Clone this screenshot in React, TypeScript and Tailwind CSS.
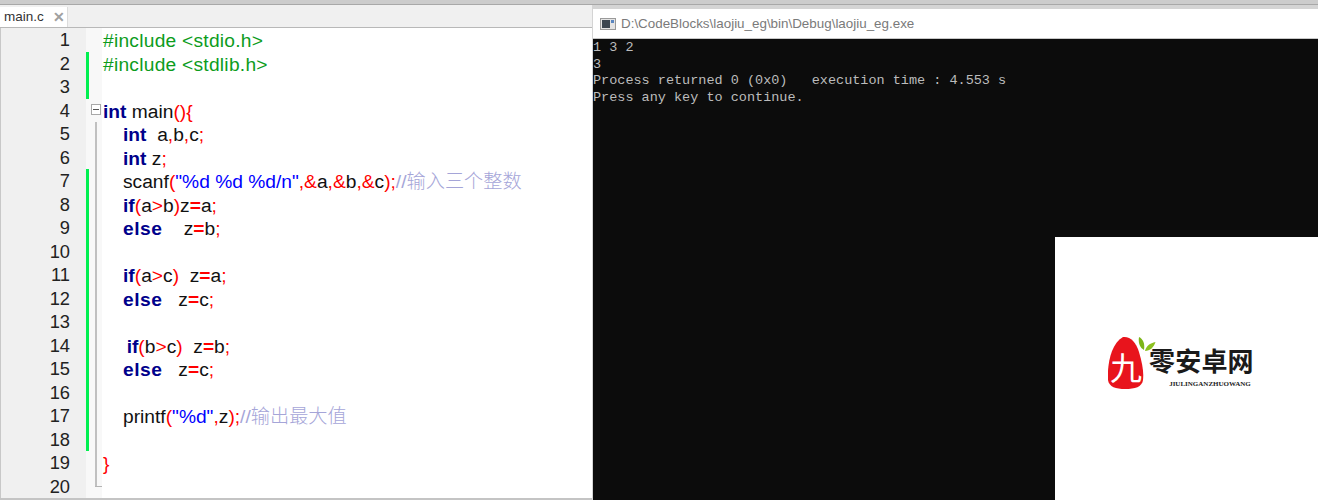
import { Fragment } from "react";

type Tok = [string, string];

const KW = "text-[#00008b] font-bold";
const KW2 = "text-[#00008b] font-bold tracking-[0.5px]";
const STR = "text-[#0000ff]";
const OP = "text-[#ff0000]";
const EQ = "text-[#ff0000] font-bold";
const CM = "text-[#a5a5d8] font-light";
const PP = "text-[#0c9c1c] tracking-[0.25px]";
const ID = "text-[#111111]";
const IN = "text-[18px]";
const IN2 = "text-[17px]";

const lines: Tok[][] = [
  [[PP, "#include <stdio.h>"]],
  [[PP, "#include <stdlib.h>"]],
  [],
  [[KW, "int"], [ID, " main"], [OP, "(){"]],
  [[IN, "    "], [KW, "int"], [ID, "  a"], [OP, ","], [ID, "b"], [OP, ","], [ID, "c"], [OP, ";"]],
  [[IN, "    "], [KW, "int"], [ID, " z"], [OP, ";"]],
  [[IN, "    "], [ID, "scanf"], [OP, "("], [STR, "\"%d %d %d/n\""], [OP, ",&"], [ID, "a"], [OP, ",&"], [ID, "b"], [OP, ",&"], [ID, "c"], [OP, ");"], [CM, "//输入三个整数"]],
  [[IN, "    "], [KW, "if"], [OP, "("], [ID, "a"], [OP, ">"], [ID, "b"], [OP, ")"], [ID, "z"], [EQ, "="], [ID, "a"], [OP, ";"]],
  [[IN, "    "], [KW2, "else"], [ID, "    z"], [EQ, "="], [ID, "b"], [OP, ";"]],
  [],
  [[IN, "    "], [KW, "if"], [OP, "("], [ID, "a"], [OP, ">"], [ID, "c"], [OP, ")"], [ID, "  z"], [EQ, "="], [ID, "a"], [OP, ";"]],
  [[IN, "    "], [KW2, "else"], [ID, "   z"], [EQ, "="], [ID, "c"], [OP, ";"]],
  [],
  [[IN2, "     "], [KW, "if"], [OP, "("], [ID, "b"], [OP, ">"], [ID, "c"], [OP, ")"], [ID, "  z"], [EQ, "="], [ID, "b"], [OP, ";"]],
  [[IN, "    "], [KW2, "else"], [ID, "   z"], [EQ, "="], [ID, "c"], [OP, ";"]],
  [],
  [[IN, "    "], [ID, "printf"], [OP, "("], [STR, "\"%d\""], [OP, ","], [ID, "z"], [OP, ");"], [CM, "//输出最大值"]],
  [],
  [[OP, "}"]],
  [],
];

const changed = (n: number) => (n >= 2 && n <= 3) || (n >= 7 && n <= 18);

function FoldMark({ n }: { n: number }) {
  if (n < 4) return null;
  if (n === 4) {
    return (
      <div className="absolute left-[2px] top-[5px] flex h-[11px] w-[10px] items-center justify-center border border-[#a8a8a8] bg-white">
        <div className="h-px w-[6px] bg-[#555555]" />
      </div>
    );
  }
  if (n === 20) {
    return (
      <Fragment>
        <div className="absolute left-[6px] top-0 h-[12px] w-[2px] bg-[#c0c0c0]" />
        <div className="absolute left-[6px] top-[11px] h-px w-[7px] bg-[#b4b4b4]" />
      </Fragment>
    );
  }
  return <div className="absolute left-[6px] top-0 h-full w-[2px] bg-[#c0c0c0]" />;
}

function Editor() {
  return (
    <div className="flex w-[592px] shrink-0 flex-col bg-white">
      {/* Tabs */}
      <div className="flex h-[22px] shrink-0 items-end bg-[#f0f0f0] font-['Liberation_Sans',sans-serif]">
        <div className="flex h-[20px] w-[68px] items-center gap-[9px] border-r border-[#dcdcdc] bg-white pl-[4px] text-[13.5px] leading-none text-[#333333]">
          <span>main.c</span>
          <span className="text-[14px] font-bold text-[#a0a0a0]">✕</span>
        </div>
      </div>
      <div className="h-px shrink-0 bg-[#b8b8b8]" />
      {/* Code */}
      <div className="flex min-h-0 flex-1 flex-col overflow-hidden border-l border-[#c8c8c8] font-['Liberation_Sans','Noto_Sans_CJK_SC',sans-serif] text-[19.2px]">
        {lines.map((toks, i) => {
          const n = i + 1;
          return (
            <div key={n} className="flex h-[23.5px] shrink-0 leading-[25px]">
              <div className="w-[69px] shrink-0 bg-[#f0f0f0] text-right text-[18.3px] leading-[24px] text-[#222222]">{n}</div>
              <div className="w-[16px] shrink-0 bg-[#f0f0f0]" />
              <div className={changed(n) ? "w-[3px] shrink-0 bg-[#00f050]" : "w-[3px] shrink-0 bg-[#f8f8f8]"} />
              <div className="relative w-[13px] shrink-0 bg-[#f8f8f8]">
                <FoldMark n={n} />
              </div>
              <div className="whitespace-pre pl-[1px]">
                {toks.map(([cls, text], j) => (
                  <span key={j} className={cls}>
                    {text}
                  </span>
                ))}
              </div>
            </div>
          );
        })}
      </div>
      <div className="h-[2px] shrink-0 bg-[#c4c4c4]" />
    </div>
  );
}

function ConsoleIcon() {
  return (
    <svg width="16" height="14" viewBox="0 0 16 14" className="shrink-0">
      <rect x="0.5" y="1.5" width="15" height="11" fill="#e4e4e4" stroke="#9a9a9a" />
      <rect x="2" y="3" width="8" height="8" fill="#3c4650" />
      <rect x="11" y="3" width="3" height="3" fill="#5a86c0" />
    </svg>
  );
}

function Logo() {
  return (
    <div className="flex items-start">
      <div className="relative flex h-[54px] w-[36px] items-center justify-center">
        <svg width="36" height="54" viewBox="0 0 36 54" className="absolute left-0 top-0">
          <path d="M15 1C22 0 28 6 31 16C34 26 36 36 35 44C34 51 27 53 17 53C8 53 1 51 0 44C-1 32 2 8 15 1Z" fill="#e8141c" />
        </svg>
        <span className="relative mt-[6px] font-['Noto_Sans_CJK_SC',sans-serif] text-[32px] font-normal leading-none text-white">九</span>
        <svg width="18" height="15" viewBox="0 0 18 15" className="absolute -right-[12px] top-[1px]">
          <path d="M1 0C5 2 7 6 6 13C2 11 0 6 1 0Z" fill="#7cb518" />
          <path d="M7 14C8 9 12 6 17.5 5C16 10 12 14 7 14Z" fill="#8cc11f" />
        </svg>
      </div>
      <div className="ml-[5px] mt-[9px] flex flex-col items-end">
        <span className="font-['Noto_Sans_CJK_SC',serif] text-[26px] font-bold leading-[30px] tracking-[0.2px] text-[#1a1a1a]">零安卓网</span>
        <span className="mr-[3px] mt-[5px] font-['Liberation_Serif',serif] text-[7px] font-bold leading-[8px] text-[#222222]">JIULINGANZHUOWANG</span>
      </div>
    </div>
  );
}

function ConsoleWindow() {
  return (
    <div className="flex min-w-0 flex-1 flex-col bg-[#d4d4d4] pt-[4px] pl-px">
      <div className="flex h-[30px] shrink-0 items-center gap-[5px] border-b border-[#c8c8c8] bg-white pl-[7px] pt-[1px] font-['Liberation_Sans',sans-serif] text-[13.4px] text-[#7a7a7a]">
        <ConsoleIcon />
        <span>D:\CodeBlocks\laojiu_eg\bin\Debug\laojiu_eg.exe</span>
      </div>
      <pre className="flex-1 bg-[#0c0c0c] pt-[1px] font-['Liberation_Mono',monospace] text-[13.5px] leading-[16.5px] text-[#bcbcbc]">
        {"1 3 2\n3\nProcess returned 0 (0x0)   execution time : 4.553 s\nPress any key to continue."}
      </pre>
    </div>
  );
}

export default function App() {
  return (
    <div className="relative flex h-[500px] w-[1318px] flex-col overflow-hidden bg-white">
      <div className="h-[4px] shrink-0 bg-[#cccccc]" />
      <div className="h-px shrink-0 bg-[#a8a8a8]" />
      <div className="flex min-h-0 flex-1">
        <Editor />
        <ConsoleWindow />
      </div>
      {/* watermark over the console */}
      <div className="absolute left-[1055px] top-[237px] flex h-[263px] w-[263px] items-start pl-[53px] pt-[99px]">
        <div className="absolute inset-0 bg-white" />
        <div className="relative">
          <Logo />
        </div>
      </div>
    </div>
  );
}
